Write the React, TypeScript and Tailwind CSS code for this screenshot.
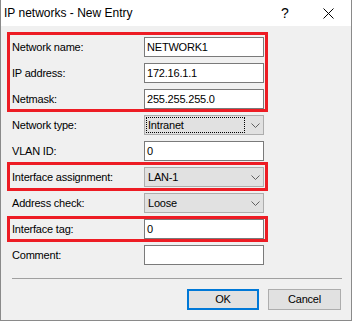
import React from "react";

const FONT = "font-['Liberation_Sans','Noto_Sans',sans-serif]";
const TXT = "text-[11px] tracking-[-0.2px] text-black";

function Label({ text }: { text: string }) {
  return <div className={"w-[132px] shrink-0 leading-[20px] whitespace-nowrap " + TXT}>{text}</div>;
}

function TextInput({ value }: { value: string }) {
  return (
    <div className={"w-[120px] h-[20px] bg-white border border-[#7a7a7a] flex items-center pl-[2px] whitespace-nowrap overflow-hidden " + TXT}>
      {value}
    </div>
  );
}

function Chevron() {
  return (
    <svg width="9" height="5" viewBox="0 0 9 5" className="block">
      <polyline points="0.5,0.5 4.5,4.5 8.5,0.5" fill="none" stroke="#606060" strokeWidth="1" />
    </svg>
  );
}

function Select({ value, focused }: { value: string; focused?: boolean }) {
  return (
    <div className="w-[120px] h-[20px] bg-[#e1e1e1] border border-[#adadad] flex items-center relative">
      <div
        className={
          "ml-[1px] w-[99px] h-[16px] flex items-center pl-[1px] whitespace-nowrap " +
          TXT +
          (focused ? " border border-dotted border-black" : " border border-transparent")
        }
      >
        {value}
      </div>
      <div className="flex-1 flex items-center justify-center pl-[2px]">
        <Chevron />
      </div>
    </div>
  );
}

function Row({ label, children }: { label: string; children: React.ReactNode }) {
  return (
    <div className="flex items-center h-[20px]">
      <Label text={label} />
      {children}
    </div>
  );
}

export default function App() {
  return (
    <div className={"w-[353px] h-[321px] bg-white " + FONT}>
      <div className="w-[352px] h-[321px] border-x border-b border-[#8a8a8a] bg-[#f0f0f0] flex flex-col">
        <div className="h-[26px] bg-white flex items-center pl-[3px] text-[12px] text-black shrink-0">
          <span className="flex-1">IP networks - New Entry</span>
          <span className="w-[20px] text-center text-[14px] mr-[28px]">?</span>
          <svg width="11" height="11" viewBox="0 0 11 11" className="mr-[17px]">
            <path d="M0.5 0.5 L10.5 10.5 M10.5 0.5 L0.5 10.5" stroke="#000" strokeWidth="1" fill="none" />
          </svg>
        </div>
        <div className="pl-[11px] pt-[11px] flex flex-col gap-[6px]">
          <div className="relative flex flex-col gap-[6px]">
            <div className="absolute left-[-5px] top-[-5px] bottom-[-3px] w-[261px] border-[3px] border-[#ed1c24] pointer-events-none" />
            <Row label="Network name:"><TextInput value="NETWORK1" /></Row>
            <Row label="IP address:"><TextInput value="172.16.1.1" /></Row>
            <Row label="Netmask:"><TextInput value="255.255.255.0" /></Row>
          </div>
          <Row label="Network type:"><Select value="Intranet" focused /></Row>
          <Row label="VLAN ID:"><TextInput value="0" /></Row>
          <div className="relative">
            <div className="absolute left-[-5px] top-[-5px] bottom-[-4px] w-[261px] border-[3px] border-[#ed1c24] pointer-events-none" />
            <Row label="Interface assignment:"><Select value="LAN-1" /></Row>
          </div>
          <Row label="Address check:"><Select value="Loose" /></Row>
          <div className="relative">
            <div className="absolute left-[-5px] top-[-3px] bottom-[-3px] w-[261px] border-[3px] border-[#ed1c24] pointer-events-none" />
            <Row label="Interface tag:"><TextInput value="0" /></Row>
          </div>
          <Row label="Comment:"><TextInput value="" /></Row>
        </div>
        <div className="ml-[11px] mt-[13px] w-[330px] h-px bg-[#a0a0a0]" />
        <div className="mt-[10px] flex justify-end gap-[9px] pr-[10px]">
          <div className={"w-[72px] h-[21px] bg-[#e1e1e1] border-2 border-[#0078d7] flex items-center justify-center " + TXT}>OK</div>
          <div className={"w-[73px] h-[21px] bg-[#e1e1e1] border border-[#adadad] flex items-center justify-center " + TXT}>Cancel</div>
        </div>
      </div>
    </div>
  );
}
